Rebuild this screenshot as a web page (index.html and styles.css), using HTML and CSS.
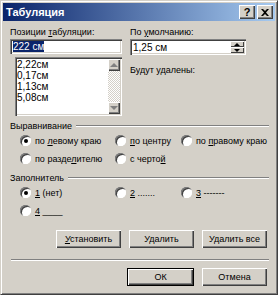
FILE: index.html
```html
<!DOCTYPE html>
<html lang="ru">
<head>
    <meta charset="UTF-8">
    <title>Табуляция</title>
    <link rel="stylesheet" href="styles.css">
</head>
<body>
<div class="window">
    <div class="titlebar">
        <span class="title">Табуляция</span>
        <span class="tbtn">?</span>
        <span class="tbtn close">
            <svg width="8" height="7" viewBox="0 0 8 7"><path d="M0 0h2l2 2 2-2h2L5 3.5 8 7H6L4 5 2 7H0l3-3.5z" fill="#000"/></svg>
        </span>
    </div>
    <div class="body">
        <div class="top">
            <div class="col-left">
                <div class="label">Позиции <u>т</u>абуляции:</div>
                <div class="field"><span class="sel">222 см</span></div>
                <div class="listbox">
                    <ul class="items">
                        <li>2,22см</li>
                        <li>0,17см</li>
                        <li>1,13см</li>
                        <li>5,08см</li>
                    </ul>
                    <div class="vscroll">
                        <span class="sbtn"><i class="arr up"></i></span>
                        <span class="track"></span>
                        <span class="sbtn"><i class="arr down"></i></span>
                    </div>
                </div>
            </div>
            <div class="col-right">
                <div class="label">По <u>у</u>молчанию:</div>
                <div class="field spin">
                    <span class="val">1,25 см</span>
                    <span class="spins">
                        <span class="sp"><i class="arr up small"></i></span>
                        <span class="sp"><i class="arr down small"></i></span>
                    </span>
                </div>
                <div class="label removed">Будут удалены:</div>
            </div>
        </div>

        <div class="group">
            <div class="legend"><span>Выравнивание</span><i class="rule"></i></div>
            <div class="radios">
                <label class="r c1"><i class="dot on"></i><span>по <u>л</u>евому краю</span></label>
                <label class="r c2"><i class="dot"></i><span><u>п</u>о центру</span></label>
                <label class="r c3"><i class="dot"></i><span>по <u>п</u>равому краю</span></label>
            </div>
            <div class="radios">
                <label class="r c1"><i class="dot"></i><span>по разде<u>л</u>ителю</span></label>
                <label class="r c2"><i class="dot"></i><span>с черто<u>й</u></span></label>
            </div>
        </div>

        <div class="group fill">
            <div class="legend"><span>Заполнитель</span><i class="rule"></i></div>
            <div class="radios">
                <label class="r c1"><i class="dot on"></i><span><u>1</u> (нет)</span></label>
                <label class="r c2"><i class="dot"></i><span><u>2</u> .......</span></label>
                <label class="r c3"><i class="dot"></i><span><u>3</u> -------</span></label>
            </div>
            <div class="radios">
                <label class="r c1"><i class="dot"></i><span><u>4</u> ____</span></label>
            </div>
        </div>

        <div class="btnrow">
            <span class="btn"><span><u>У</u>становить</span></span>
            <span class="btn">Удалить</span>
            <span class="btn">Удалить все</span>
        </div>
        <div class="sep"></div>
        <div class="btnrow last">
            <span class="btn default">ОК</span>
            <span class="btn">Отмена</span>
        </div>
    </div>
</div>
</body>
</html>
```
FILE: styles.css
```css
* {
    margin: 0;
    padding: 0;
    box-sizing: border-box;
}

body {
    width: 278px;
    height: 295px;
    overflow: hidden;
    font-family: "Liberation Sans", Arial, sans-serif;
    font-size: 9px;
    color: #000;
}

.window {
    width: 278px;
    height: 295px;
    background: #d4d0c8;
    border: 1px solid;
    border-color: #d4d0c8 #404040 #404040 #d4d0c8;
    box-shadow: inset 1px 1px 0 #fff, inset -1px -1px 0 #808080;
    padding: 2px;
}

.titlebar {
    height: 18px;
    display: flex;
    align-items: center;
    padding: 0 2px 0 3px;
    background: linear-gradient(to right, #0a246a, #a6caf0);
}

.title {
    flex: 1;
    color: #fff;
    font-weight: bold;
    font-size: 11px;
}

.tbtn {
    width: 16px;
    height: 14px;
    display: flex;
    align-items: center;
    justify-content: center;
    background: #d4d0c8;
    font-weight: bold;
    font-size: 11px;
    box-shadow: inset 1px 1px 0 #fff, inset -1px -1px 0 #404040, inset -2px -2px 0 #808080;
}

.close {
    margin-left: 2px;
}

.body {
    padding: 6px 5px 0 5px;
}

.top {
    display: flex;
    height: 90px;
}

.col-left {
    width: 112px;
    margin-left: 2px;
}

.col-right {
    width: 116px;
    margin-left: 8px;
}

.label {
    height: 10px;
    line-height: 10px;
    white-space: nowrap;
}

.field {
    margin-top: 2px;
    height: 15px;
    background: #fff;
    box-shadow: inset 1px 1px 0 #808080, inset 2px 2px 0 #404040, inset -1px -1px 0 #fff, inset -2px -2px 0 #d4d0c8;
    padding: 2px 0 0 3px;
    font-size: 10px;
    line-height: 11px;
}

.sel {
    background: #0a246a;
    color: #fff;
}

.listbox {
    margin: 3px 0 0 5px;
    height: 59px;
    display: flex;
    background: #fff;
    box-shadow: inset 1px 1px 0 #808080, inset 2px 2px 0 #404040, inset -1px -1px 0 #fff, inset -2px -2px 0 #d4d0c8;
    padding: 2px;
    overflow: hidden;
}

.items {
    flex: 1;
    list-style: none;
    font-size: 10px;
    line-height: 11px;
}

.vscroll {
    width: 12px;
    display: flex;
    flex-direction: column;
}

.track {
    flex: 1;
    background: repeating-conic-gradient(#d4d0c8 0 25%, #fff 0 50%) 0 0 / 2px 2px;
}

.sbtn {
    height: 12px;
    display: flex;
    align-items: center;
    justify-content: center;
    background: #d4d0c8;
    box-shadow: inset 1px 1px 0 #fff, inset -1px -1px 0 #404040, inset -2px -2px 0 #808080;
}

.arr {
    width: 0;
    height: 0;
    border-left: 4px solid transparent;
    border-right: 4px solid transparent;
}

.arr.up {
    border-bottom: 4px solid #808080;
}

.arr.down {
    border-top: 4px solid #808080;
}

.arr.small {
    border-left-width: 3px;
    border-right-width: 3px;
}

.arr.small.up {
    border-bottom: 3px solid #000;
}

.arr.small.down {
    border-top: 3px solid #000;
}

.spin {
    display: flex;
    padding: 2px 2px 2px 3px;
    height: 16px;
}

.val {
    flex: 1;
    padding-top: 1px;
}

.spins {
    width: 14px;
    display: flex;
    flex-direction: column;
}

.sp {
    flex: 1;
    display: flex;
    align-items: center;
    justify-content: center;
    background: #d4d0c8;
    box-shadow: inset 1px 1px 0 #fff, inset -1px -1px 0 #404040;
}

.removed {
    margin-top: 10px;
}

.group {
    margin-top: 4px;
}

.fill {
    margin-top: 6px;
}

.legend {
    display: flex;
    align-items: center;
    height: 10px;
    padding-left: 2px;
}

.legend span {
    margin-right: 4px;
}

.rule {
    flex: 1;
    height: 2px;
    border-top: 1px solid #808080;
    border-bottom: 1px solid #fff;
    margin-right: 1px;
}

.radios {
    display: flex;
    height: 17px;
    align-items: center;
    margin-top: 1px;
}

.r {
    display: flex;
    align-items: center;
    white-space: nowrap;
}

.c1 {
    width: 95px;
    margin-left: 12px;
}

.c2 {
    width: 66px;
}

.dot {
    width: 11px;
    height: 11px;
    border-radius: 50%;
    background: #fff;
    margin-right: 4px;
    position: relative;
    box-shadow: inset 1px 1px 0 #808080, inset 2px 2px 0 #404040, inset -1px -1px 0 #fff;
}

.dot.on::after {
    content: "";
    position: absolute;
    left: 4px;
    top: 4px;
    width: 4px;
    height: 4px;
    border-radius: 50%;
    background: #000;
}

.btnrow {
    display: flex;
    justify-content: flex-end;
    gap: 8px;
    padding-right: 3px;
    margin-top: 11px;
}

.btn {
    width: 65px;
    height: 18px;
    display: flex;
    align-items: center;
    justify-content: center;
    background: #d4d0c8;
    box-shadow: inset 1px 1px 0 #fff, inset -1px -1px 0 #404040, inset -2px -2px 0 #808080;
    white-space: nowrap;
}

.btn.default {
    width: 67px;
    border: 1px solid #000;
}

.sep {
    margin: 11px 1px 0 3px;
    height: 2px;
    border-top: 1px solid #808080;
    border-bottom: 1px solid #fff;
}

.btnrow.last {
    margin-top: 7px;
}
```
